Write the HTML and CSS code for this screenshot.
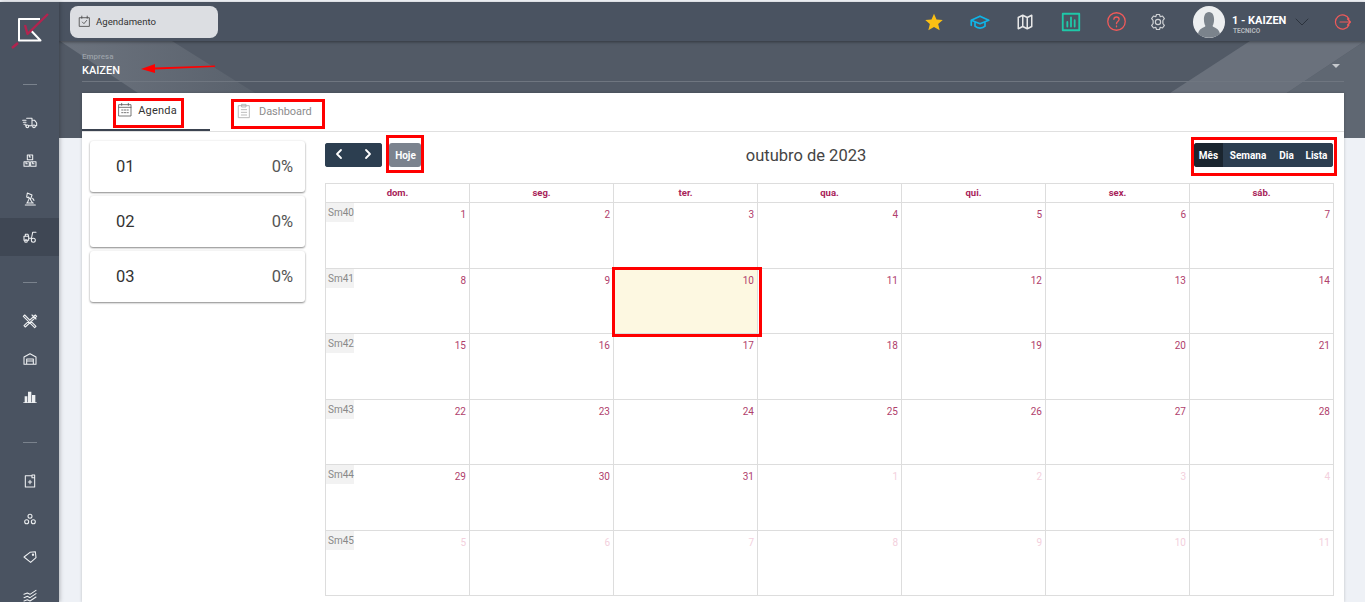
FILE: index.html
```html
<!DOCTYPE html>
<html lang="pt-BR">
<head>
  <meta charset="UTF-8" />
  <meta name="viewport" content="width=device-width, initial-scale=1.0" />
  <title>Agendamento</title>
  <link rel="stylesheet" href="styles.css">
</head>
<body>
  <aside class="sidebar">
    <div class="logo">
      <svg width="59" height="56" viewBox="0 0 59 56" fill="none">
        <path d="M40 17H19V38.500H40.500L31.500 29" stroke="#fff" stroke-width="2" stroke-linecap="butt"/>
        <path d="M48 12L27.500 32L25 23" stroke="#b2244f" stroke-width="2.400" stroke-linecap="butt"/>
        <path d="M12 46L18 41" stroke="#b2244f" stroke-width="2.400" stroke-linecap="butt"/>
      </svg>
    </div>
    <div class="side-sep"></div>
    <a class="side-item"><svg viewBox="0 0 24 24"><path d="M7 5H15V16H10M15 8H19L22 12V16H20M1 8H6M2 11H6M3 14H6M5 16H6"/><circle cx="8" cy="17" r="2"/><circle cx="18" cy="17" r="2"/></svg></a>
    <a class="side-item"><svg viewBox="0 0 24 24"><path d="M8 3H16V10H8ZM3 13H11V20H3ZM13 13H21V20H13ZM11 3V6H13M6 13V16H8M16 13V16H18"/></svg></a>
    <a class="side-item"><svg viewBox="0 0 24 24"><path d="M5 21H20M7 18H17M8 3L15 6L13 12L7 9ZM10 9L16 18M10 13L8 18M16 11L18 14"/></svg></a>
    <a class="side-item active"><svg viewBox="0 0 24 24"><path d="M3 11H10V17H3ZM10 14H14M14 15L16 5H21M5 11V8H9L10 11"/><circle cx="6" cy="18" r="2"/><circle cx="17" cy="17" r="3"/></svg></a>
    <div class="side-sep"></div>
    <a class="side-item"><svg viewBox="0 0 24 24"><path d="M4 3L21 20L19 22L2 5ZM20 3L3 19L5 21L22 5ZM15 3L21 9"/></svg></a>
    <a class="side-item"><svg viewBox="0 0 24 24"><path d="M3 9L12 4L21 9V20H3ZM7 20V12H17V20M7 15H17"/></svg></a>
    <a class="side-item"><svg viewBox="0 0 24 24"><path class="solid" d="M4 11H8V20H4ZM9 4H14V20H9ZM15 9H20V20H15ZM2 20H22V21H2Z"/></svg></a>
    <div class="side-sep"></div>
    <a class="side-item"><svg viewBox="0 0 24 24"><path d="M5 4H15V7H19V21H5ZM15 7V3H19V7M12 11V16M9.500 13.500H14.500"/></svg></a>
    <a class="side-item"><svg viewBox="0 0 24 24"><circle cx="12" cy="8" r="3"/><circle cx="7" cy="16" r="3"/><circle cx="17" cy="16" r="3"/></svg></a>
    <a class="side-item"><svg viewBox="0 0 24 24"><path d="M3 12L12 5L20 4L21 13L13 20Z"/><circle cx="16.500" cy="8.500" r="1"/></svg></a>
    <a class="side-item"><svg viewBox="0 0 24 24"><path d="M3 11L8 9L12 11L21 5M3 16L8 14L12 16L21 10M3 21L8 19L12 21L21 15"/></svg></a>
  </aside>

  <div class="main">
    <header class="topbar">
      <div class="module-chip">
        <svg viewBox="0 0 24 24" width="13" height="13"><path d="M3 5H21V21H3ZM7 2V6M17 2V6M8 13L11 16L16 10"/></svg>
        <span>Agendamento</span>
      </div>
      <div class="top-actions">
        <a class="top-icon"><svg class="star" viewBox="0 0 24 24" width="20" height="20"><path d="M12 2L15 9L22.500 9.500L17 14.500L18.800 22L12 18L5.200 22L7 14.500L1.500 9.500L9 9Z"/></svg></a>
        <a class="top-icon cap"><svg viewBox="0 0 24 24" width="20" height="20"><path d="M1.500 10L12 5L22.500 10L12 14ZM6 12V17C9 20 15 20 18 17V12M1.500 10V16"/></svg></a>
        <a class="top-icon map"><svg viewBox="0 0 24 24" width="18" height="18"><path d="M3 6L9 3L15 6L21 3V18L15 21L9 18L3 21ZM9 3V18M15 6V21"/></svg></a>
        <a class="top-icon chart"><svg viewBox="0 0 24 24" width="22" height="22"><path d="M3 3H21V21H3ZM8 17V12M12 17V7M16 17V10"/></svg></a>
        <a class="top-icon help"><svg viewBox="0 0 24 24" width="21" height="21"><circle cx="12" cy="12" r="10"/><path d="M9 9.500C9 6 15 6 15 9.500C15 12 12 12 12 14.500M12 17V18"/></svg></a>
        <a class="top-icon gear"><svg viewBox="0 0 24 24" width="18" height="18"><circle cx="12" cy="12" r="3.500"/><path d="M10 2H14L15 5L18 4L20.500 7.500L18.500 10L18.500 14L20.500 16.500L18 20L15 19L14 22H10L9 19L6 20L3.500 16.500L5.500 14L5.500 10L3.500 7.500L6 4L9 5Z"/></svg></a>
        <div class="user">
          <svg class="avatar" viewBox="0 0 32 32" width="32" height="32"><circle cx="16" cy="16" r="16" fill="#eceef0"/><path d="M5 28C6 22 11 22 12.500 20C10 16 10 6 16 6C22 6 22 16 19.500 20C21 22 26 22 27 28C21 33 11 33 5 28Z" fill="#7b838c"/></svg>
          <div class="user-text">
            <div class="user-name">1 - KAIZEN</div>
            <div class="user-role">TECNICO</div>
          </div>
          <svg class="user-caret" viewBox="0 0 14 8" width="14" height="8"><path d="M1 1L7 7L13 1"/></svg>
        </div>
        <a class="top-icon logout"><svg viewBox="0 0 24 24" width="18" height="18"><path d="M20 8A9.500 9.500 0 1 0 20 16M8 12H22M18 8L22 12L18 16"/></svg></a>
      </div>
    </header>

    <section class="band">
      <svg class="band-art" viewBox="0 0 1306 97" preserveAspectRatio="none">
        <defs>
          <linearGradient id="bandLight" x1="0" y1="0" x2="1" y2="0">
            <stop offset="0" stop-color="#6c737e"/>
            <stop offset="1" stop-color="#59616c"/>
          </linearGradient>
        </defs>
        <path d="M1 0H113L196 52H79Z" fill="url(#bandLight)"/>
        <path d="M1191 0H1306L1228 52H1111Z" fill="#6a717c"/>
        <path d="M1306 0V97H1160Z" fill="#5f6772"/>
      </svg>
      <div class="company">
        <div class="company-text">
          <label>Empresa</label>
          <div class="company-name">KAIZEN</div>
        </div>
        <span class="company-caret"></span>
      </div>
    </section>

    <section class="card">
      <nav class="tabs">
        <a class="tab current">
          <svg viewBox="0 0 24 24" width="16" height="16"><path d="M3 4H21V21H3ZM3 8H21M7 2V5M17 2V5M7 12H9M11 12H13M15 12H17M7 16H9M11 16H13M15 16H17"/></svg>
          Agenda
        </a>
        <a class="tab">
          <svg viewBox="0 0 24 24" width="16" height="16"><path d="M4 4H20V22H4ZM9 2H15V6H9ZM8 10H16M8 14H16M8 18H16"/></svg>
          Dashboard
        </a>
      </nav>
      <div class="agenda">
        <div class="stats">
          <div class="stat"><span>01</span><span class="pct">0%</span></div>
          <div class="stat"><span>02</span><span class="pct">0%</span></div>
          <div class="stat"><span>03</span><span class="pct">0%</span></div>
        </div>
        <div class="calendar">
          <div class="cal-toolbar">
            <div class="cal-left">
              <div class="btn-group nav-btns">
                <button class="cal-btn"><svg viewBox="0 0 8 12" width="8" height="12"><path d="M6 2L2 6L6 10"/></svg></button>
                <button class="cal-btn"><svg viewBox="0 0 8 12" width="8" height="12"><path d="M2 2L6 6L2 10"/></svg></button>
              </div>
              <button class="cal-btn today-btn">Hoje</button>
            </div>
            <h2 class="cal-title">outubro de 2023</h2>
            <div class="btn-group views">
              <button class="cal-btn on">Mês</button>
              <button class="cal-btn">Semana</button>
              <button class="cal-btn">Dia</button>
              <button class="cal-btn">Lista</button>
            </div>
          </div>
          <div class="cal-grid">
            <div class="dow">dom.</div><div class="dow">seg.</div><div class="dow">ter.</div><div class="dow">qua.</div><div class="dow">qui.</div><div class="dow">sex.</div><div class="dow">sáb.</div>
            <div class="day"><span class="week">Sm40</span>1</div><div class="day">2</div><div class="day">3</div><div class="day">4</div><div class="day">5</div><div class="day">6</div><div class="day">7</div>
            <div class="day"><span class="week">Sm41</span>8</div><div class="day">9</div><div class="day today">10</div><div class="day">11</div><div class="day">12</div><div class="day">13</div><div class="day">14</div>
            <div class="day"><span class="week">Sm42</span>15</div><div class="day">16</div><div class="day">17</div><div class="day">18</div><div class="day">19</div><div class="day">20</div><div class="day">21</div>
            <div class="day"><span class="week">Sm43</span>22</div><div class="day">23</div><div class="day">24</div><div class="day">25</div><div class="day">26</div><div class="day">27</div><div class="day">28</div>
            <div class="day"><span class="week">Sm44</span>29</div><div class="day">30</div><div class="day">31</div><div class="day off">1</div><div class="day off">2</div><div class="day off">3</div><div class="day off">4</div>
            <div class="day off"><span class="week">Sm45</span>5</div><div class="day off">6</div><div class="day off">7</div><div class="day off">8</div><div class="day off">9</div><div class="day off">10</div><div class="day off">11</div>
          </div>
        </div>
      </div>
    </section>
  </div>

  <!-- marcacoes em vermelho por cima da tela -->
  <svg class="mark-arrow" viewBox="0 0 80 10" width="80" height="10"><path d="M2 6L16 1V4.500L76 2.500V4L16 6.500V10Z"/></svg>
  <div class="mark mark-agenda"></div>
  <div class="mark mark-dash"></div>
  <div class="mark mark-hoje"></div>
  <div class="mark mark-views"></div>
  <div class="mark mark-today"></div>
</body>
</html>
```

FILE: styles.css
```css
* {
  box-sizing: border-box;
}
html, body {
  height: 100%;
}
body {
  margin: 0;
  padding-top: 2px;
  display: flex;
  position: relative;
  overflow: hidden;
  font-family: Roboto, "Liberation Sans", sans-serif;
  background: #eef1f6;
  color: #333;
}
svg {
  fill: none;
  stroke-linecap: round;
  stroke-linejoin: round;
}

/* sidebar */
.sidebar {
  width: 59px;
  flex-shrink: 0;
  background: #4a5361;
  box-shadow: 1px 0 4px rgba(0, 0, 0, 0.25);
  z-index: 2;
}
.logo {
  height: 56px;
}
.logo svg {
  display: block;
}
.side-sep {
  height: 1px;
  width: 14px;
  margin: 26px auto 19px;
  background: #7a828d;
}
.side-item {
  height: 38px;
  display: flex;
  align-items: center;
  justify-content: center;
}
.side-item.active {
  background: #3f4754;
}
.side-item svg {
  width: 16px;
  height: 16px;
  stroke: #eef0f2;
  stroke-width: 1.6;
}
.side-item svg .solid {
  fill: #eef0f2;
  stroke: none;
}

/* top bar */
.main {
  flex: 1;
  min-width: 0;
  display: flex;
  flex-direction: column;
}
.topbar {
  height: 39px;
  flex-shrink: 0;
  display: flex;
  align-items: center;
  justify-content: space-between;
  padding: 0 0 0 11px;
  background: #4a5361;
  box-shadow: 0 1px 3px rgba(0, 0, 0, 0.4);
  z-index: 1;
}
.module-chip {
  width: 148px;
  height: 32px;
  display: flex;
  align-items: center;
  gap: 5px;
  padding: 0 0 1px 8px;
  background: #dcdee2;
  border-radius: 8px;
  font-size: 9.600px;
  color: #333;
}
.module-chip svg {
  stroke: #444;
  stroke-width: 1.5;
}
.top-actions {
  display: flex;
  align-items: center;
  height: 100%;
}
.top-icon {
  width: 45.500px;
  display: flex;
  justify-content: center;
}
.star path {
  fill: #fbbf13;
  stroke: none;
}
.cap svg {
  stroke: #0fb5e8;
  stroke-width: 2;
}
.map svg {
  stroke: #e8e8e8;
  stroke-width: 2;
}
.chart svg {
  stroke: #1fc8a8;
  stroke-width: 2;
}
.help svg {
  stroke: #f05a5a;
  stroke-width: 1.5;
}
.gear {
  width: 38px;
}
.gear svg {
  stroke: #d0d2d5;
  stroke-width: 1.6;
}
.user {
  display: flex;
  align-items: center;
  margin-left: 16px;
  width: 141px;
}
.avatar {
  flex-shrink: 0;
}
.user-text {
  margin-left: 7px;
  padding-top: 6px;
  width: 63px;
}
.user-name {
  font-size: 11px;
  font-weight: 700;
  color: #fff;
  line-height: 13px;
}
.user-role {
  font-size: 6.500px;
  font-weight: 700;
  color: #b5b9be;
  line-height: 9px;
  margin-left: 1px;
}
.user-caret {
  stroke: #2c333d;
  stroke-width: 1;
}
.logout {
  width: auto;
  margin-right: 13px;
}
.logout svg {
  stroke: #f05a5a;
  stroke-width: 1.600;
}

/* faixa da empresa */
.band {
  height: 97px;
  flex-shrink: 0;
  position: relative;
  background: #525a66;
  padding: 9px 21px 0 23px;
}
.band-art {
  position: absolute;
  left: 0;
  top: 0;
  width: 100%;
  height: 100%;
  stroke: none;
}
.company {
  position: relative;
  height: 32px;
  display: flex;
  align-items: center;
  justify-content: space-between;
  border-bottom: 1px solid #6f7680;
}
.company-text {
  margin-bottom: 1px;
}
.company label {
  display: block;
  font-size: 8px;
  font-weight: 500;
  line-height: 10px;
  color: #9aa0a8;
}
.company-name {
  font-size: 11px;
  font-weight: 500;
  line-height: 14px;
  margin-top: 2px;
  color: #fff;
}
.company-caret {
  width: 0;
  height: 0;
  margin-right: 4px;
  border-left: 4px solid transparent;
  border-right: 4px solid transparent;
  border-top: 4px solid #c6c9cd;
}

/* card */
.card {
  flex: 1;
  min-height: 0;
  margin: -45px 21px 0 23px;
  position: relative;
  background: #fff;
  box-shadow: 0 0 3px rgba(0, 0, 0, 0.2);
}
.tabs {
  height: 39px;
  display: flex;
  border-bottom: 1px solid #e0e0e0;
}
.tab {
  width: 128px;
  height: 38px;
  display: flex;
  align-items: center;
  justify-content: center;
  gap: 5px;
  font-size: 11px;
  color: #8d8d8d;
  padding-bottom: 2px;
}
.tab svg {
  stroke: #aaa;
  stroke-width: 1.2;
}
.tab + .tab {
  width: 121px;
  padding-left: 5px;
  justify-content: flex-start;
  margin-left: 21px;
  gap: 7px;
  letter-spacing: -0.050px;
}
.tab.current {
  color: #333;
  letter-spacing: 0.2px;
  padding-left: 2px;
  border-bottom: 2px solid #3b4350;
}
.tab.current svg {
  stroke: #555;
}
.agenda {
  display: flex;
  padding: 9px 10px 0 8px;
}
.stats {
  width: 215px;
  flex-shrink: 0;
  display: flex;
  flex-direction: column;
  gap: 4px;
}
.stat {
  height: 51px;
  display: flex;
  align-items: center;
  justify-content: space-between;
  padding: 0 12px 0 26px;
  border-radius: 3px;
  background: #fff;
  box-shadow: 0 1px 2px rgba(0, 0, 0, 0.45), 0 0 3px rgba(0, 0, 0, 0.06);
  font-size: 16.500px;
  color: #333;
}
.stat .pct {
  color: #555;
}

/* calendario */
.calendar {
  flex: 1;
  min-width: 0;
  margin-left: 20px;
  padding-top: 2px;
}
.cal-toolbar {
  height: 24px;
  display: flex;
  align-items: center;
  justify-content: space-between;
  margin-bottom: 16px;
  padding-right: 1px;
}
.cal-left {
  display: flex;
  gap: 7px;
}
.btn-group {
  display: flex;
  border-radius: 3px;
  overflow: hidden;
  background: #2c3e50;
}
.cal-btn {
  height: 24px;
  border: none;
  padding: 0 6px;
  font-family: inherit;
  font-size: 10px;
  font-weight: 700;
  color: #fff;
  background: #2c3e50;
}
.nav-btns {
  width: 57px;
}
.nav-btns .cal-btn {
  flex: 1;
  padding: 0;
}
.nav-btns svg {
  stroke: #fff;
  stroke-width: 1.8;
}
.today-btn {
  width: 32px;
  padding: 0 0 0 1px;
  background: #7b838e;
  border-radius: 3px;
}
.cal-title {
  margin: 0 0 0 -3px;
  font-size: 16.500px;
  font-weight: 400;
  color: #444;
}
.views {
  width: 139px;
}
.views .cal-btn {
  padding: 0;
  flex: 0 0 auto;
}
.views .cal-btn:nth-child(1) {
  width: 29px;
}
.views .cal-btn:nth-child(2) {
  width: 50px;
}
.views .cal-btn:nth-child(3) {
  width: 27px;
}
.views .cal-btn:nth-child(4) {
  width: 33px;
}
.views .on {
  background: #1a252f;
}
.cal-grid {
  display: grid;
  grid-template-columns: repeat(7, 144px);
  grid-template-rows: 19px repeat(6, 65.500px);
  width: 1009px;
  border-top: 1px solid #ddd;
  border-left: 1px solid #ddd;
}
.dow {
  border-right: 1px solid #ddd;
  border-bottom: 1px solid #ddd;
  text-align: center;
  font-size: 9.500px;
  font-weight: 700;
  line-height: 17px;
  color: #a8245a;
}
.day {
  position: relative;
  border-right: 1px solid #ddd;
  border-bottom: 1px solid #ddd;
  text-align: right;
  padding: 6px 3px 0 0;
  font-size: 10px;
  line-height: 12px;
  color: #b0406c;
}
.day.off {
  color: #f3d0dd;
}
.day.today {
  background: #fdf8e1;
}
.week {
  position: absolute;
  left: 0;
  top: 0;
  width: 28px;
  height: 19px;
  background: #f2f2f2;
  font-size: 10px;
  line-height: 20px;
  text-align: left;
  padding-left: 2px;
  color: #888;
}

/* marcacoes */
.mark {
  position: absolute;
  border: 3px solid #f00;
  z-index: 5;
}
.mark-agenda {
  left: 113px;
  top: 98px;
  width: 71px;
  height: 30px;
}
.mark-dash {
  left: 231px;
  top: 99px;
  width: 94px;
  height: 30px;
}
.mark-hoje {
  left: 386px;
  top: 135px;
  width: 38px;
  height: 38px;
}
.mark-views {
  left: 1191px;
  top: 137px;
  width: 146px;
  height: 39px;
}
.mark-today {
  left: 612px;
  top: 267px;
  width: 150px;
  height: 70px;
}
.mark-arrow {
  position: absolute;
  left: 139px;
  top: 63px;
  z-index: 5;
  stroke: none;
}
.mark-arrow path {
  fill: #f00;
}
```
